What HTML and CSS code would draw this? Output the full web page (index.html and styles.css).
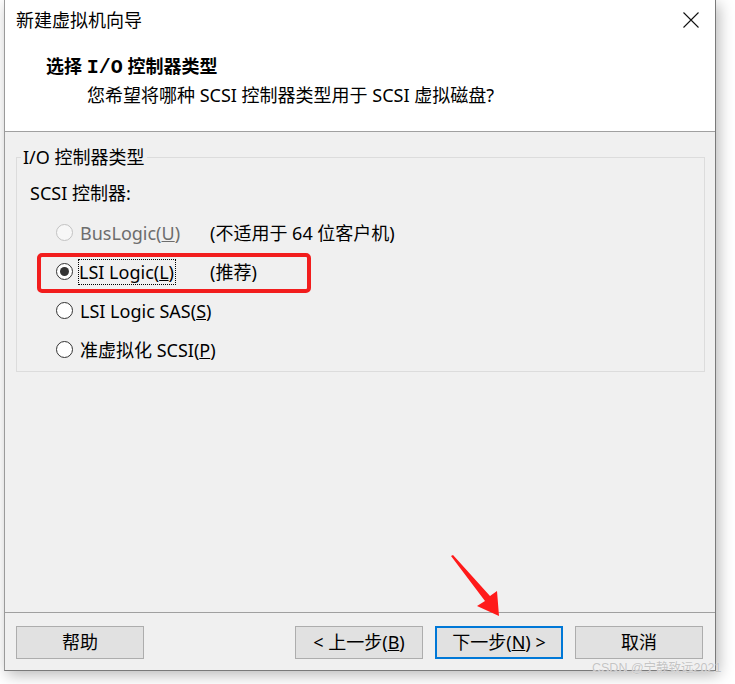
FILE: index.html
```html
<!DOCTYPE html>
<html lang="zh-CN">
<head>
<meta charset="utf-8">
<title>新建虚拟机向导</title>
<link rel="stylesheet" href="styles.css">
</head>
<body>
<div class="window">
  <div class="header">
    <div class="titlebar">
      <span class="title">新建虚拟机向导</span>
      <svg class="close" width="16" height="16" viewBox="0 0 16 16"><path d="M0.5 0.5 L15.5 15.5 M15.5 0.5 L0.5 15.5" stroke="#111" stroke-width="1.1" fill="none"/></svg>
    </div>
    <div class="heading">选择 <span class="serif">I/O</span> 控制器类型</div>
    <div class="subtitle">您希望将哪种 SCSI 控制器类型用于 SCSI 虚拟磁盘?</div>
  </div>
  <div class="content">
    <fieldset class="group">
      <legend>I/O 控制器类型</legend>
      <div class="label">SCSI 控制器:</div>
      <div class="options">
        <label class="row disabled">
          <input type="radio" name="ctl" disabled>
          <span class="text">BusLogic(<u>U</u>)</span>
          <span class="note">(不适用于 64 位客户机)</span>
        </label>
        <label class="row marked">
          <input type="radio" name="ctl" checked>
          <span class="text"><span class="focus">LSI Logic(<u>L</u>)</span></span>
          <span class="note">(推荐)</span>
          <span class="annot"></span>
        </label>
        <label class="row">
          <input type="radio" name="ctl">
          <span class="text">LSI Logic SAS(<u>S</u>)</span>
        </label>
        <label class="row">
          <input type="radio" name="ctl">
          <span class="text">准虚拟化 SCSI(<u>P</u>)</span>
        </label>
      </div>
    </fieldset>
    <div class="footer">
      <button class="btn">帮助</button>
      <div class="spacer"></div>
      <button class="btn">&lt; 上一步(<u>B</u>)</button>
      <button class="btn default">下一步(<u>N</u>) &gt;</button>
      <button class="btn">取消</button>
    </div>
  </div>
</div>
<svg class="arrow" width="735" height="684" viewBox="0 0 735 684"><polygon points="451,556 485,601 477,606 499,616 497,591 490,596 453,555" fill="#ff1a1a"/></svg>
<div class="watermark">CSDN @宁静致远2021</div>
</body>
</html>
```

FILE: styles.css
```css
html, body {
  margin: 0;
  padding: 0;
  background: #ffffff;
}
body {
  width: 735px;
  height: 684px;
  position: relative;
  overflow: hidden;
  font-family: "Segoe UI", "Noto Sans", "Noto Sans CJK SC", sans-serif;
  font-size: 18px;
  color: #000;
}
.window {
  margin-left: 4px;
  width: 712px;
  height: 671px;
  box-sizing: border-box;
  border-left: 1px solid #9a9a9a;
  border-right: 1px solid #7a7a7a;
  border-bottom: 1px solid #7a7a7a;
  box-shadow: 3px 4px 14px rgba(0, 0, 0, 0.28);
  display: flex;
  flex-direction: column;
  background: #f0f0f0;
}
.header {
  background: #ffffff;
  height: 132px;
  box-sizing: border-box;
  border-bottom: 1px solid #a0a0a0;
}
.titlebar {
  height: 40px;
  display: flex;
  align-items: center;
  padding-left: 11px;
  padding-right: 16px;
}
.title {
  flex: 1;
  line-height: 40px;
}
.close {
  display: block;
}
.heading {
  margin-top: 14px;
  padding-left: 41px;
  line-height: 24px;
  font-weight: bold;
  font-size: 18px;
  white-space: nowrap;
}
.serif {
  font-family: "Liberation Mono", monospace;
  font-size: 20px;
}
.subtitle {
  margin-top: 3px;
  padding-left: 82px;
  line-height: 24px;
}
.content {
  flex: 1;
  display: flex;
  flex-direction: column;
}
.group {
  margin: 14px 10px 0 11px;
  padding: 13px 0 2px 13px;
  border: 1px solid #dcdcdc;
  min-width: 0;
}
.group legend {
  padding: 0 2px;
  margin-left: -9px;
  line-height: 22px;
}
.label {
  line-height: 24px;
}
.options {
  margin-top: 8px;
  display: flex;
  flex-direction: column;
}
.row {
  position: relative;
  height: 39px;
  display: flex;
  align-items: center;
  padding-left: 26px;
  white-space: nowrap;
}
.row input {
  appearance: none;
  -webkit-appearance: none;
  margin: 0 7px 0 0;
  width: 17px;
  height: 17px;
  box-sizing: border-box;
  border: 1px solid #333;
  border-radius: 50%;
  background: #fff;
  flex: none;
  display: grid;
  place-items: center;
}
.row input:checked::after {
  content: "";
  width: 9px;
  height: 9px;
  border-radius: 50%;
  background: #333;
}
.row input:disabled {
  border-color: #c2c2c2;
  background: #f7f7f7;
}
.text {
  min-width: 130px;
  line-height: 22px;
  flex: none;
}
.focus {
  outline: 1px dotted #000;
  outline-offset: 0;
  padding: 0 1px 0 0;
  margin-left: -1px;
}
.disabled .text {
  color: #6d6d6d;
}
.note {
  line-height: 22px;
}
.annot {
  position: absolute;
  left: 7px;
  top: 1px;
  width: 274px;
  height: 40px;
  box-sizing: border-box;
  border: 4px solid #f21d1d;
  border-radius: 5px;
}
.footer {
  margin-top: auto;
  border-top: 1px solid #a0a0a0;
  height: 58px;
  box-sizing: border-box;
  padding: 13px 12px 0 11px;
  display: flex;
  align-items: flex-start;
  gap: 12px;
}
.spacer {
  flex: 1;
}
.btn {
  width: 128px;
  height: 33px;
  box-sizing: border-box;
  border: 1px solid #adadad;
  background: #e1e1e1;
  font-family: "Segoe UI", "Noto Sans", "Noto Sans CJK SC", sans-serif;
  font-size: 18px;
  color: #000;
  padding: 0;
  line-height: 31px;
}
.btn.default {
  border: 2px solid #0078d7;
  line-height: 29px;
}
.arrow {
  position: absolute;
  left: 0;
  top: 0;
  pointer-events: none;
}
.watermark {
  position: absolute;
  left: 592px;
  top: 659px;
  font-size: 12.5px;
  line-height: 18px;
  color: #c4c4c4;
  text-shadow: 0 0 1px #fff;
  white-space: nowrap;
  font-family: "Liberation Sans", "Noto Sans CJK SC", sans-serif;
}
```
